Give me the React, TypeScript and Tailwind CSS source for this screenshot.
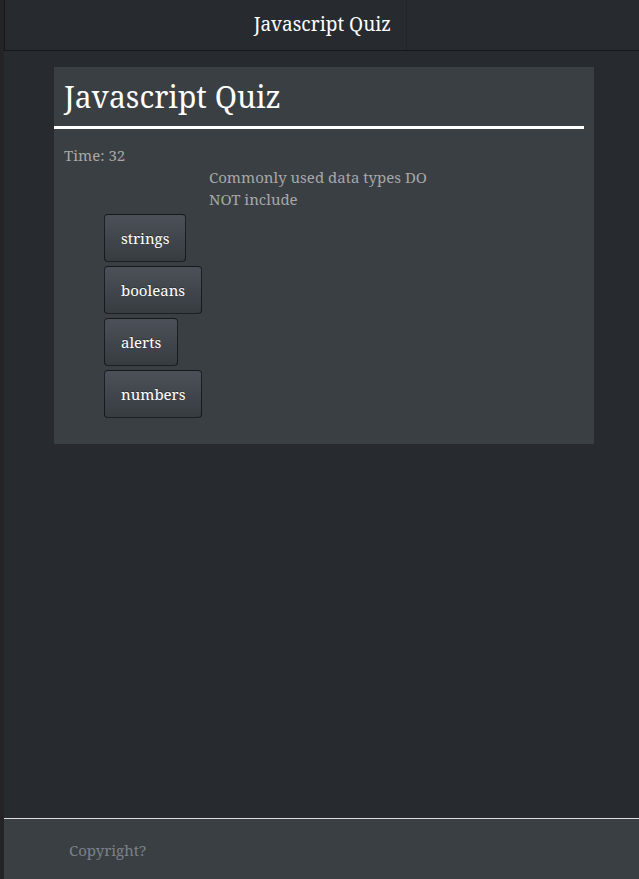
const answers = ["strings", "booleans", "alerts", "numbers"];

export default function App() {
  return (
    <div
      className="min-h-[879px] flex bg-[#222428] text-[#c8c8c8]"
      style={{ fontFamily: '"Noto Serif", "Droid Serif", "DejaVu Serif", serif' }}
    >
      <div className="ml-[4px] flex-1 flex flex-col bg-[#272b30]">
        {/* Header */}
        <header className="h-[51px] flex border-l border-b border-[#16181b]">
          <div className="w-[402px] flex items-center justify-end pr-[15px] pb-[2px] border-r border-[#202327]">
            <span className="text-[19px] text-white">Javascript Quiz</span>
          </div>
        </header>

        {/* Quiz card */}
        <main className="flex-1 pt-[16px] pl-[50px] pr-[45px]">
          <div className="bg-[#3a3f44] pb-[26px]">
            <h1 className="mr-[10px] pl-[10px] pt-[10px] pb-[9px] text-[30px] leading-[40px] text-white border-b-[3px] border-white">
              Javascript Quiz
            </h1>
            <p className="mt-[15px] pl-[10px] text-[15px] leading-[22px] text-[#a7a7a7]">Time: 32</p>
            <p className="ml-[155px] w-[240px] text-[15px] leading-[22px] text-[#a7a7a7]">
              Commonly used data types DO NOT include
            </p>
            <div className="mt-[4px] ml-[50px] flex flex-col items-start gap-[4px]">
              {answers.map((a) => (
                <button
                  key={a}
                  className="h-[48px] px-[16px] rounded-[4px] border border-black/60 bg-gradient-to-b from-[#4b5158] to-[#373c41] text-[15px] text-white [text-shadow:0_-1px_0_rgba(0,0,0,0.3)]"
                >
                  {a}
                </button>
              ))}
            </div>
          </div>
        </main>

        {/* Footer */}
        <footer className="h-[61px] border-t border-[#dcdcdc] bg-[#3a3f44] flex items-center pl-[65px] pt-[2px]">
          <span className="text-[15px] text-[#7a8288]">Copyright?</span>
        </footer>
      </div>
    </div>
  );
}
